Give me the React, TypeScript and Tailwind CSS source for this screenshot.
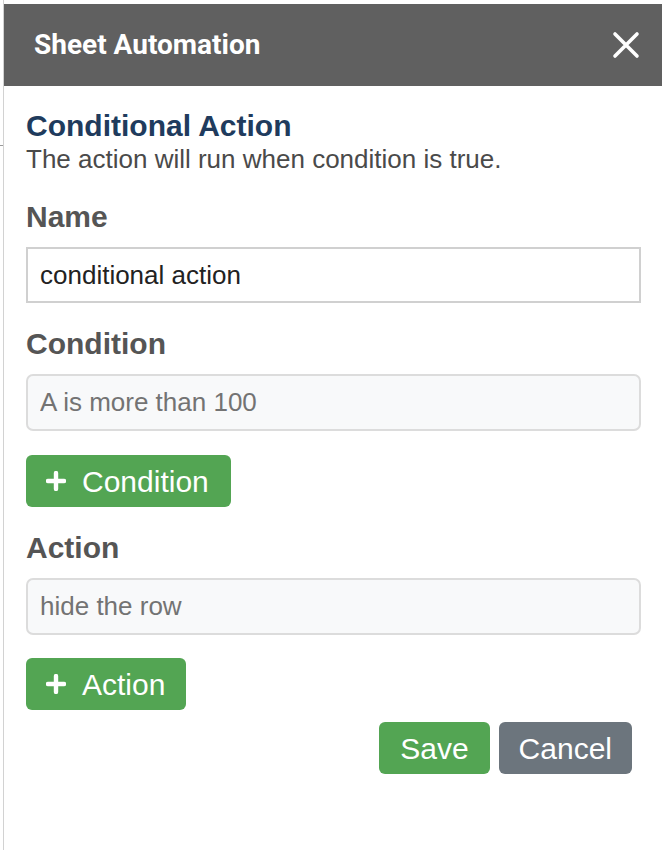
import React, { useState } from "react";

const PlusIcon = () => (
  <svg width="20" height="20" viewBox="0 0 20 20" className="shrink-0">
    <path d="M10 2v16M2 10h16" stroke="white" strokeWidth="4.4" strokeLinecap="round" />
  </svg>
);

const CloseIcon = () => (
  <svg width="28" height="28" viewBox="0 0 28 28">
    <path d="M3 3l22 22M25 3L3 25" stroke="white" strokeWidth="3.6" strokeLinecap="round" />
  </svg>
);

const Label: React.FC<{ children: React.ReactNode; first?: boolean }> = ({ children, first }) => (
  <div
    className={
      first
        ? "mt-6 text-[30px] leading-[36px] font-bold text-[#555555]"
        : "mt-[23px] text-[30px] leading-[36px] font-bold text-[#555555]"
    }
  >
    {children}
  </div>
);

const App: React.FC = () => {
  const [name, setName] = useState("conditional action");
  const [condition, setCondition] = useState("");
  const [action, setAction] = useState("");

  return (
    <div
      className="relative min-h-[850px] bg-white pl-[3px]"
      style={{ fontFamily: '"Liberation Sans", Arial, sans-serif' }}
    >
      {/* bit of the sheet behind the panel */}
      <div className="absolute left-0 top-[145px] h-px w-[3px] bg-[#9a9a9a]" />

      <div className="min-h-[850px] border-l border-[#d2d2d2] pt-[4px]">
        {/* Header */}
        <div className="flex h-[82px] items-center justify-between bg-[#606060] pl-[30px] pr-[22px]">
          <h1
            className="text-[28px] font-bold text-white"
            style={{ fontFamily: "Roboto, Arial, sans-serif" }}
          >
            Sheet Automation
          </h1>
          <button className="flex items-center justify-center">
            <CloseIcon />
          </button>
        </div>

        {/* Body */}
        <div className="pl-[22px] pr-[21px] pt-[22px]">
          <h2 className="text-[30px] leading-[36px] font-bold text-[#203b5d]">Conditional Action</h2>
          <p className="text-[26px] leading-[31px] text-[#4a4a4a]">
            The action will run when condition is true.
          </p>

          <Label first>Name</Label>
          <input
            type="text"
            value={name}
            onChange={(e) => setName(e.target.value)}
            className="mt-3 block h-[56px] w-full border-2 border-[#d0d0d0] bg-white px-3 text-[26px] text-[#222222] outline-none"
          />

          <Label>Condition</Label>
          <input
            type="text"
            placeholder="A is more than 100"
            value={condition}
            onChange={(e) => setCondition(e.target.value)}
            className="mt-3 block h-[57px] w-full rounded-[7px] border-2 border-[#dcdcdc] bg-[#f8f9fa] px-3 text-[26px] text-[#222222] placeholder:text-[#737373] outline-none"
          />

          <button className="mt-6 flex h-[52px] items-center gap-[16px] rounded-[6px] bg-[#53a553] pl-[20px] pr-[22px] text-[30px] text-white">
            <PlusIcon />
            <span>Condition</span>
          </button>

          <Label>Action</Label>
          <input
            type="text"
            placeholder="hide the row"
            value={action}
            onChange={(e) => setAction(e.target.value)}
            className="mt-3 block h-[57px] w-full rounded-[7px] border-2 border-[#dcdcdc] bg-[#f8f9fa] px-3 text-[26px] text-[#222222] placeholder:text-[#737373] outline-none"
          />

          <button className="mt-[23px] flex h-[52px] items-center gap-[16px] rounded-[6px] bg-[#53a553] pl-[20px] pr-[21px] text-[30px] text-white">
            <PlusIcon />
            <span>Action</span>
          </button>

          <div className="mt-3 flex justify-end gap-[9px] pr-[9px]">
            <button className="h-[52px] rounded-[6px] bg-[#53a553] px-[21px] text-[30px] text-white">
              Save
            </button>
            <button className="h-[52px] rounded-[6px] bg-[#6c757d] px-[20px] text-[30px] text-white">
              Cancel
            </button>
          </div>
        </div>
      </div>
    </div>
  );
};

export default App;
